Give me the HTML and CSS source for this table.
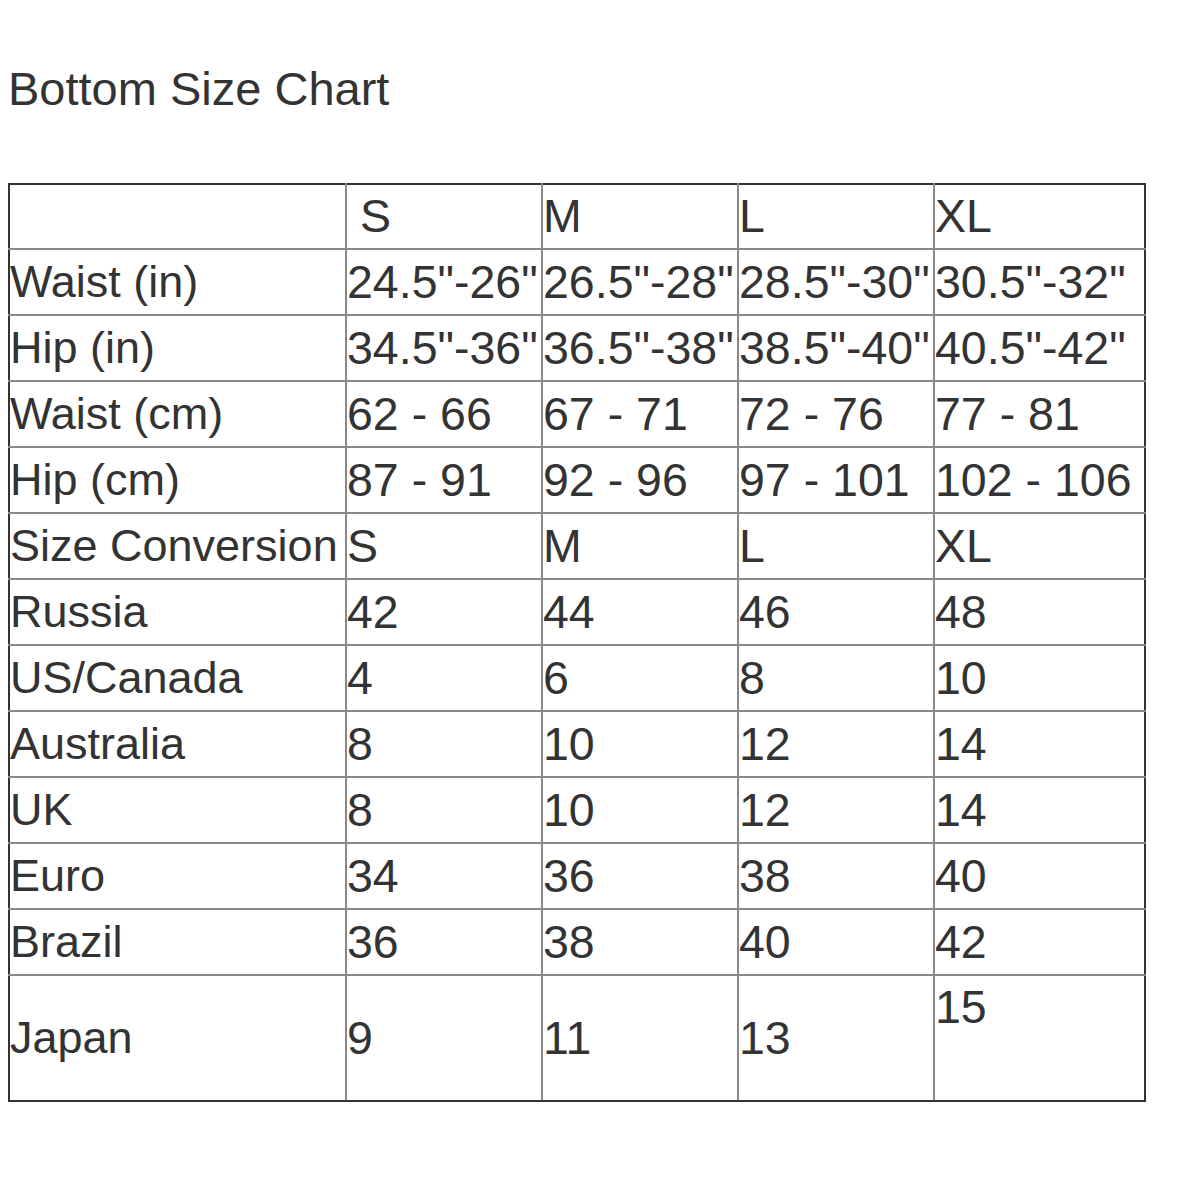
FILE: index.html
```html
<!DOCTYPE html>
<html>
<head>
<meta charset="utf-8">
<link rel="stylesheet" href="styles.css">
</head>
<body>
<div class="title">Bottom Size Chart</div>
<table class="chart">
  <colgroup>
    <col class="c-label">
    <col class="c-size">
    <col class="c-size">
    <col class="c-size">
    <col class="c-last">
  </colgroup>
  <tr><td></td><td class="v">&nbsp;S</td><td class="v">M</td><td class="v">L</td><td class="v">XL</td></tr>
  <tr><td>Waist (in)</td><td class="v">24.5"-26"</td><td class="v">26.5"-28"</td><td class="v">28.5"-30"</td><td class="v">30.5"-32"</td></tr>
  <tr><td>Hip (in)</td><td class="v">34.5"-36"</td><td class="v">36.5"-38"</td><td class="v">38.5"-40"</td><td class="v">40.5"-42"</td></tr>
  <tr><td>Waist (cm)</td><td class="v">62 - 66</td><td class="v">67 - 71</td><td class="v">72 - 76</td><td class="v">77 - 81</td></tr>
  <tr><td>Hip (cm)</td><td class="v">87 - 91</td><td class="v">92 - 96</td><td class="v">97 - 101</td><td class="v">102 - 106</td></tr>
  <tr><td>Size Conversion</td><td class="v">S</td><td class="v">M</td><td class="v">L</td><td class="v">XL</td></tr>
  <tr><td>Russia</td><td class="v">42</td><td class="v">44</td><td class="v">46</td><td class="v">48</td></tr>
  <tr><td>US/Canada</td><td class="v">4</td><td class="v">6</td><td class="v">8</td><td class="v">10</td></tr>
  <tr><td>Australia</td><td class="v">8</td><td class="v">10</td><td class="v">12</td><td class="v">14</td></tr>
  <tr><td>UK</td><td class="v">8</td><td class="v">10</td><td class="v">12</td><td class="v">14</td></tr>
  <tr><td>Euro</td><td class="v">34</td><td class="v">36</td><td class="v">38</td><td class="v">40</td></tr>
  <tr><td>Brazil</td><td class="v">36</td><td class="v">38</td><td class="v">40</td><td class="v">42</td></tr>
  <tr class="last"><td>Japan</td><td class="v">9</td><td class="v">11</td><td class="v">13</td><td class="v">15<br>&nbsp;</td></tr>
</table>
</body>
</html>
```
FILE: styles.css
```css
body {
  margin: 8px;
  background: #fff;
  color: #333;
  font-family: "Liberation Sans", Arial, sans-serif;
}

.title {
  margin-top: 55px;
  font-size: 47px;
  line-height: 52px;
  color: #333;
}

.chart {
  margin-top: 68px;
  width: 1136px;
  table-layout: fixed;
  border-collapse: collapse;
  border: 2px solid #333;
  font-size: 45px;
}

.c-label { width: 337px; }
.c-size { width: 196px; }
.c-last { width: 211px; }

.chart td {
  border: 2px solid #888;
  padding: 1px 0;
  line-height: 62px;
  white-space: nowrap;
  vertical-align: middle;
}

.chart tr:first-child td { border-top-color: #333; }
.chart tr:last-child td { border-bottom-color: #333; }
.chart td:first-child { border-left-color: #333; }
.chart td:last-child { border-right-color: #333; }

.chart tr:first-child td { padding-top: 0; }
.chart tr.last td { padding-top: 0; padding-bottom: 0; }

.chart td.v {
  font-size: 46.5px;
}
```
